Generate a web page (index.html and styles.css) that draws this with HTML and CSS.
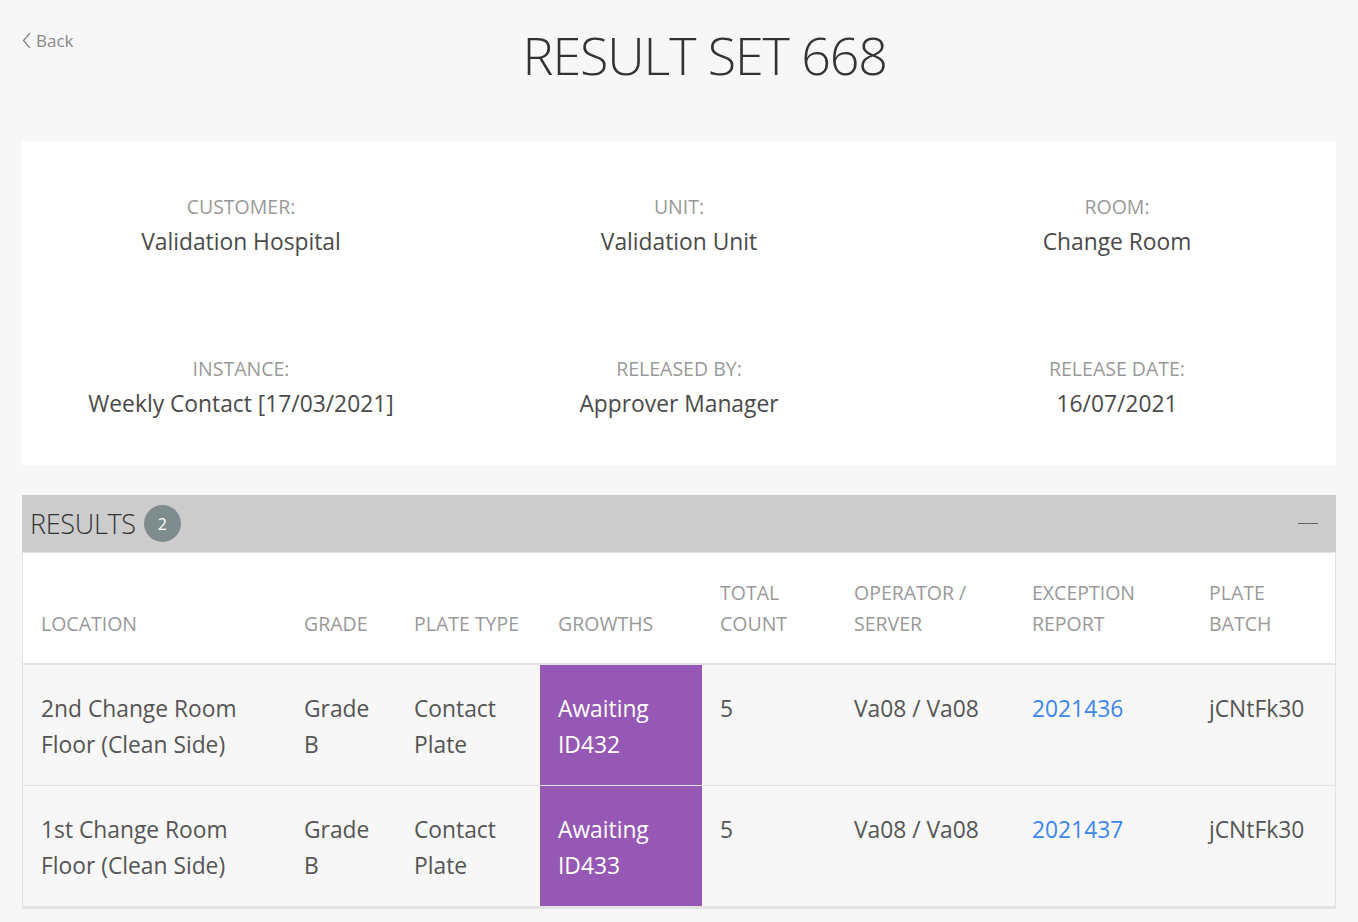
FILE: index.html
```html
<!DOCTYPE html>
<html lang="en">
<head>
<meta charset="utf-8">
<title>Result Set 668</title>
<link rel="stylesheet" href="styles.css">
</head>
<body>
<header class="page-head">
  <a class="back" href="#"><svg class="back-icon" viewBox="0 0 9 17" width="9" height="17"><path d="M8 1 L1.5 8.5 L8 16" fill="none" stroke="#888" stroke-width="1.3"/></svg>Back</a>
  <h1 class="title">RESULT SET 668</h1>
</header>

<section class="info-card">
  <div class="info-item"><div class="info-label">CUSTOMER:</div><div class="info-value">Validation Hospital</div></div>
  <div class="info-item"><div class="info-label">UNIT:</div><div class="info-value">Validation Unit</div></div>
  <div class="info-item"><div class="info-label">ROOM:</div><div class="info-value">Change Room</div></div>
  <div class="info-item"><div class="info-label">INSTANCE:</div><div class="info-value">Weekly Contact [17/03/2021]</div></div>
  <div class="info-item"><div class="info-label">RELEASED BY:</div><div class="info-value">Approver Manager</div></div>
  <div class="info-item"><div class="info-label">RELEASE DATE:</div><div class="info-value">16/07/2021</div></div>
</section>

<section class="results">
  <div class="results-head">
    <div class="results-title">RESULTS <span class="badge">2</span></div>
    <span class="collapse"></span>
  </div>
  <table class="results-table">
    <colgroup>
      <col class="c-loc"><col class="c-grade"><col class="c-type"><col class="c-growth"><col class="c-count"><col class="c-op"><col class="c-exc"><col class="c-batch">
    </colgroup>
    <thead>
      <tr>
        <th>LOCATION</th>
        <th>GRADE</th>
        <th>PLATE TYPE</th>
        <th>GROWTHS</th>
        <th>TOTAL<br>COUNT</th>
        <th>OPERATOR /<br>SERVER</th>
        <th>EXCEPTION<br>REPORT</th>
        <th>PLATE<br>BATCH</th>
      </tr>
    </thead>
    <tbody>
      <tr>
        <td>2nd Change Room<br>Floor (Clean Side)</td>
        <td>Grade<br>B</td>
        <td>Contact<br>Plate</td>
        <td class="growth">Awaiting<br>ID432</td>
        <td>5</td>
        <td>Va08 / Va08</td>
        <td><a class="link" href="#">2021436</a></td>
        <td>jCNtFk30</td>
      </tr>
      <tr>
        <td>1st Change Room<br>Floor (Clean Side)</td>
        <td>Grade<br>B</td>
        <td>Contact<br>Plate</td>
        <td class="growth">Awaiting<br>ID433</td>
        <td>5</td>
        <td>Va08 / Va08</td>
        <td><a class="link" href="#">2021437</a></td>
        <td>jCNtFk30</td>
      </tr>
    </tbody>
  </table>
</section>
</body>
</html>
```

FILE: styles.css
```css
* { box-sizing: border-box; }
html, body { margin: 0; }
body {
  background: #f7f7f7;
  font-family: "Open Sans", "Noto Sans", sans-serif;
  color: #555;
  padding: 0 22px 14px;
}
.page-head {
  display: flex;
  align-items: flex-start;
  height: 141px;
}
.back {
  display: inline-flex;
  align-items: center;
  gap: 5px;
  margin-top: 29px;
  font-size: 17px;
  color: #888;
  text-decoration: none;
  flex: none;
}
.back-icon { display: block; }
.title {
  flex: 1;
  text-align: center;
  margin: 18px 0 0;
  font-size: 52px;
  font-weight: 300;
  line-height: 74px;
  color: #333;
  letter-spacing: -1.1px;
}
.info-card {
  background: #fff;
  display: grid;
  grid-template-columns: repeat(3, 1fr);
  row-gap: 99px;
  padding: 53px 0 46px;
  text-align: center;
}
.info-label {
  font-size: 19.5px;
  line-height: 26px;
  color: #999;
}
.info-value {
  margin-top: 7px;
  font-size: 22.8px;
  line-height: 30px;
  color: #4a4a4a;
}
.results {
  margin-top: 30px;
  border: 1px solid #e3e3e3;
  border-top: 0;
  background: #f7f7f7;
}
.results-head {
  background: #cccccc;
  height: 58px;
  margin: 0 -1px;
  display: flex;
  align-items: center;
  justify-content: space-between;
  padding: 0 18px 0 8px;
  border-bottom: 1px solid #e3e3e3;
}
.results-title {
  display: flex;
  align-items: center;
  gap: 8px;
  font-size: 27px;
  font-weight: 300;
  letter-spacing: -0.3px;
  color: #333;
}
.badge {
  width: 37px;
  height: 37px;
  border-radius: 50%;
  background: #7f8c8d;
  color: #fff;
  font-size: 16px;
  font-weight: 400;
  letter-spacing: 0;
  display: inline-flex;
  align-items: center;
  justify-content: center;
}
.collapse {
  width: 20px;
  height: 1px;
  background: #666;
}
.results-table {
  width: 100%;
  border-collapse: collapse;
  table-layout: fixed;
}
.c-loc { width: 263px; }
.c-grade { width: 110px; }
.c-type { width: 144px; }
.c-growth { width: 162px; }
.c-count { width: 134px; }
.c-op { width: 178px; }
.c-exc { width: 177px; }
.c-batch { width: 144px; }
.results-table th {
  background: #fff;
  text-align: left;
  vertical-align: bottom;
  font-weight: 400;
  font-size: 19.5px;
  line-height: 31px;
  color: #999;
  padding: 24px 18px 24px;
  border-bottom: 2px solid #e3e3e3;
}
.results-table td {
  vertical-align: top;
  font-size: 22.8px;
  line-height: 36px;
  color: #555;
  padding: 26px 18px 22px;
  border-bottom: 1px solid #e3e3e3;
}
.results-table tbody tr:last-child td { border-bottom: 2px solid #e3e3e3; }
.results-table td.growth {
  background: #9558b4;
  color: #fff;
}
.link {
  color: #3d86f0;
  text-decoration: none;
}
```
